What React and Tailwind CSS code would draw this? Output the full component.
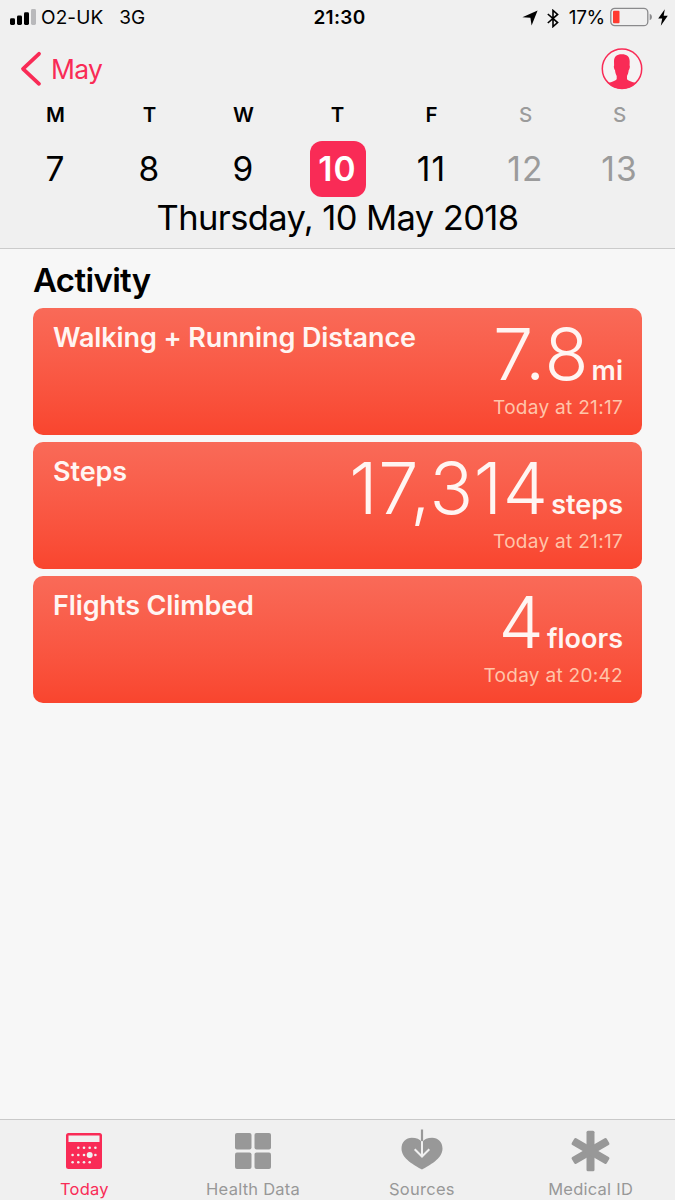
import React from 'react';
import clsx from 'clsx';

const days = [
  { label: 'M', date: 7 },
  { label: 'T', date: 8 },
  { label: 'W', date: 9 },
  { label: 'T', date: 10, selected: true },
  { label: 'F', date: 11 },
  { label: 'S', date: 12, weekend: true },
  { label: 'S', date: 13, weekend: true },
];

const activities = [
  { title: 'Walking + Running Distance', value: '7.8', unit: 'mi', time: 'Today at 21:17' },
  { title: 'Steps', value: '17,314', unit: 'steps', time: 'Today at 21:17' },
  { title: 'Flights Climbed', value: '4', unit: 'floors', time: 'Today at 20:42' },
];

const StatusBar = () => (
  <div className="grid grid-cols-3 h-[34px] items-center text-[19px] leading-[34px] pt-px pl-[10px] pr-[7px]">
    <div className="flex items-center">
      <svg width="27" height="18" viewBox="0 0 27 18" className="mr-1">
        <rect x="0" y="9.3" width="5" height="6.7" rx="1.4" />
        <rect x="7" y="6.5" width="5" height="9.5" rx="1.4" />
        <rect x="14" y="3.2" width="5" height="12.8" rx="1.4" />
        <rect x="21" y="0" width="5" height="16" rx="1.4" fill="#b9b9bb" />
      </svg>
      <span className="tracking-[0.1px]">O2-UK</span>
      <span className="ml-[16px]">3G</span>
    </div>
    <div className="pl-px text-center font-semibold tracking-[0.3px]">21:30</div>
    <div className="flex items-center justify-end">
      <svg width="16" height="16" viewBox="0 0 16 16" className="mr-[9px] shrink-0">
        <path d="M15.6 0.4 9.6 15.4 8.4 7.8 0.4 7.2Z" />
      </svg>
      <svg width="12" height="19" viewBox="0 0 12 19" fill="none" stroke="#000" strokeWidth="1.6" className="mr-[10px] shrink-0">
        <path d="M0.8 5 10.6 13.6 6 17.6V1.4L10.6 5.4 0.8 14" />
      </svg>
      <span className="tracking-[-0.3px]">17%</span>
      <svg width="43" height="20" viewBox="0 0 43 20" className="mb-[2px] ml-[5px] mr-[5px] shrink-0">
        <rect x="0.8" y="1.3" width="37" height="17.4" rx="4" fill="none" stroke="#8a8a8c" strokeWidth="1.3" />
        <rect x="3" y="3.8" width="6.5" height="12.4" rx="1" fill="#ff3b30" />
        <path d="M39.7 6.8q2.3 1 2.3 3.2t-2.3 3.2Z" fill="#8a8a8c" />
      </svg>
      <svg width="10" height="17" viewBox="0 0 10 17" className="mb-[2px] shrink-0">
        <path d="M6.8 0.2 0.2 9.6H4.2L2.8 16.8 9.8 6.8H5.7Z" />
      </svg>
    </div>
  </div>
);

const NavBar = () => (
  <div className="flex h-[70px] items-center justify-between pl-[20px] pr-[32px]">
    <button className="flex items-center text-[#f92b56]">
      <svg width="22" height="36" viewBox="0 0 22 36" fill="none" stroke="currentColor" strokeWidth="3.8" strokeLinecap="round" strokeLinejoin="round">
        <path d="M19 2.8 3 17.8 19 32.8" />
      </svg>
      <span className="ml-[9px] text-[26.5px] leading-[36px] tracking-[-0.7px]">May</span>
    </button>
    <svg width="42" height="42" viewBox="0 0 42 42" className="text-[#f92b56]">
      <circle cx="21" cy="20.7" r="19.7" fill="#f5f3f4" stroke="currentColor" strokeWidth="1.5" />
      <path
        fill="currentColor"
        d="M20.8 6.3C26 6.3 28.8 9 28.7 13.500L28.600 17.500C29.200 18.200 28.700 20.800 27.700 22.300 27.400 24.800 26.800 26.500 26 28V31C27 33 31 33.800 35 35A19.700 19.700 0 0 1 7 35C11 33.800 14.700 33 15.700 31V28C14.900 26.500 14.300 24.800 14 22.300 13 20.800 12.500 18.200 13.100 17.500L13 13.500C12.900 9 15.600 6.300 20.800 6.300Z"
      />
    </svg>
  </div>
);

const WeekStrip = () => (
  <div className="grid grid-cols-7 pl-[8.5px] pr-[8.5px]">
    {days.map((day, i) => (
      <div key={i} className={clsx('flex flex-col items-center', day.weekend ? 'text-[#9b9b9b]' : 'text-black')}>
        <span className={clsx('text-[20.5px] leading-[21px]', day.weekend ? 'font-medium' : 'font-semibold')}>{day.label}</span>
        <span
          className={clsx(
            'mt-[16px] flex h-[56px] w-[56px] items-center justify-center rounded-[12px] text-[33.5px] tracking-[1.2px]',
            day.selected && 'bg-[#f92b56] font-semibold text-white'
          )}
        >
          {day.date}
        </span>
      </div>
    ))}
  </div>
);

const ActivityCard = ({ activity }) => (
  <div className="flex h-[127px] justify-between rounded-[10px] bg-linear-to-b from-[#f96a58] to-[#f9452e] pl-[20px] pr-[19px] text-[#fff5f2]">
    <h3 className="mt-[12px] text-[27px] leading-[36px] font-semibold tracking-[-0.1px] whitespace-nowrap">{activity.title}</h3>
    <div className="text-right">
      <div className="flex h-[88px] items-baseline justify-end leading-[92px] whitespace-nowrap">
        <span className="text-[72px] font-light tracking-[0.7px]">{activity.value}</span>
        <span className="ml-[2.5px] text-[27px] font-semibold">{activity.unit}</span>
      </div>
      <div className="text-[19px] leading-[24px] tracking-[0.3px] text-[#ffc5aa]">{activity.time}</div>
    </div>
  </div>
);

const CalendarIcon = () => (
  <svg width="42" height="44" viewBox="0 0 42 44">
    <rect x="3" y="5" width="36" height="36" rx="2.5" fill="currentColor" />
    <rect x="5.5" y="7.5" width="31" height="6.5" fill="#f0f0f0" />
    <g fill="#f0f0f0">
      {[15.3, 21, 26.7, 32.4].map((x) => <circle key={x} cx={x} cy="19.7" r="1.3" />)}
      {[9.6, 15.3, 21, 32.4].map((x) => <circle key={x} cx={x} cy="27" r="1.3" />)}
      {[9.6, 15.3, 21, 26.7].map((x) => <circle key={x} cx={x} cy="34.3" r="1.3" />)}
      <circle cx="26.7" cy="27" r="3" />
    </g>
  </svg>
);

const GridIcon = () => (
  <svg width="42" height="44" viewBox="0 0 42 44" fill="currentColor">
    <rect x="3" y="5" width="16.5" height="16.5" rx="2" />
    <rect x="22.5" y="5" width="16.5" height="16.5" rx="2" />
    <rect x="3" y="24.5" width="16.5" height="16.5" rx="2" />
    <rect x="22.5" y="24.5" width="16.5" height="16.5" rx="2" />
  </svg>
);

const SourcesIcon = () => (
  <svg width="42" height="44" viewBox="0 0 42 44">
    <path d="M21 41.5C14 37.5 0.5 31 0.5 20.5 0.5 14 5 9.8 10.8 9.8c4.5 0 8.2 1.4 10.2 4.7 2-3.3 5.7-4.7 10.2-4.7C37 9.8 41.5 14 41.5 20.5 41.5 31 28 37.5 21 41.5Z" fill="currentColor" />
    <path d="M21 1.5V13" stroke="currentColor" strokeWidth="2.2" />
    <path d="M21 13.5V28M13.7 21.2 21 28.5l7.3-7.3" fill="none" stroke="#f0f0f0" strokeWidth="2" />
  </svg>
);

const MedicalIcon = () => (
  <svg width="42" height="44" viewBox="0 0 42 44" fill="currentColor">
    <rect x="16.5" y="2.8" width="8" height="40.4" rx="1.5" />
    <rect x="16.5" y="2.8" width="8" height="40.4" rx="1.5" transform="rotate(60 20.5 23)" />
    <rect x="16.5" y="2.8" width="8" height="40.4" rx="1.5" transform="rotate(-60 20.5 23)" />
  </svg>
);

const tabs = [
  { label: 'Today', Icon: CalendarIcon, active: true },
  { label: 'Health Data', Icon: GridIcon },
  { label: 'Sources', Icon: SourcesIcon },
  { label: 'Medical ID', Icon: MedicalIcon },
];

const TabBar = () => (
  <nav className="grid h-[81px] grid-cols-4 border-t border-[#c9c9c9] bg-[#f0f0f0]">
    {tabs.map(({ label, Icon, active }) => (
      <button key={label} className={clsx('flex flex-col items-center pt-[8px]', active ? 'text-[#f92b56]' : 'text-[#989898]')}>
        <Icon />
        <span className="mt-[7px] text-[16.5px] leading-[20px] tracking-[0.25px]">{label}</span>
      </button>
    ))}
  </nav>
);

export default function App() {
  return (
    <div className="flex h-[1200px] w-[675px] flex-col overflow-hidden bg-[#f7f7f7] font-['Inter',sans-serif] text-black">
      <header className="h-[249px] border-b border-[#cbcbcb] bg-[#f0f0f0]">
        <StatusBar />
        <NavBar />
        <WeekStrip />
        <div className="mt-px text-center text-[34.5px] leading-[40px] tracking-[-0.6px]">Thursday, 10 May 2018</div>
      </header>
      <main className="flex-1 pl-[33px] pr-[33px] pt-[11px]">
        <h2 className="text-[33px] leading-[40px] font-semibold tracking-[-0.65px]">Activity</h2>
        <div className="mt-[8px] flex flex-col gap-[6.8px]">
          {activities.map((activity) => (
            <ActivityCard key={activity.title} activity={activity} />
          ))}
        </div>
      </main>
      <TabBar />
    </div>
  );
}
